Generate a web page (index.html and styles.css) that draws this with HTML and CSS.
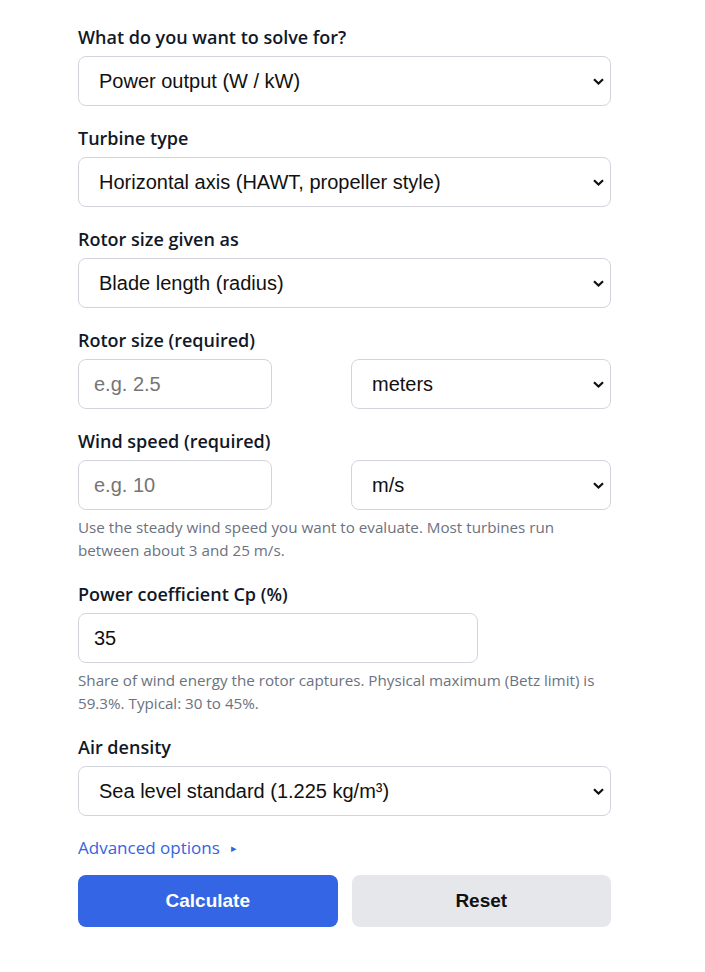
FILE: index.html
```html
<!DOCTYPE html>
<html lang="en">
<head>
<meta charset="utf-8">
<title>Wind turbine power calculator</title>
<link rel="stylesheet" href="styles.css">
</head>
<body>
<form class="calc">
  <div class="field">
    <label class="label" for="solve">What do you want to solve for?</label>
    <select id="solve" class="control select">
      <option>Power output (W / kW)</option>
    </select>
  </div>
  <div class="field">
    <label class="label" for="type">Turbine type</label>
    <select id="type" class="control select">
      <option>Horizontal axis (HAWT, propeller style)</option>
    </select>
  </div>
  <div class="field">
    <label class="label" for="given">Rotor size given as</label>
    <select id="given" class="control select">
      <option>Blade length (radius)</option>
    </select>
  </div>
  <div class="field">
    <label class="label" for="size">Rotor size (required)</label>
    <div class="pair">
      <input id="size" class="control input short" type="text" placeholder="e.g. 2.5">
      <select class="control select">
        <option>meters</option>
      </select>
    </div>
  </div>
  <div class="field">
    <label class="label" for="wind">Wind speed (required)</label>
    <div class="pair">
      <input id="wind" class="control input short" type="text" placeholder="e.g. 10">
      <select class="control select">
        <option>m/s</option>
      </select>
    </div>
    <p class="help">Use the steady wind speed you want to evaluate. Most turbines run between about 3 and 25 m/s.</p>
  </div>
  <div class="field">
    <label class="label" for="cp">Power coefficient Cp (%)</label>
    <input id="cp" class="control input medium" type="text" value="35">
    <p class="help">Share of wind energy the rotor captures. Physical maximum (Betz limit) is 59.3%. Typical: 30 to 45%.</p>
  </div>
  <div class="field">
    <label class="label" for="air">Air density</label>
    <select id="air" class="control select">
      <option>Sea level standard (1.225 kg/m³)</option>
    </select>
  </div>
  <div class="advanced">Advanced options <span class="tri">&#9656;</span></div>
  <div class="actions">
    <button type="button" class="btn primary">Calculate</button>
    <button type="button" class="btn secondary">Reset</button>
  </div>
</form>
</body>
</html>
```
FILE: styles.css
```css
html, body {
  margin: 0;
  padding: 0;
  background: #ffffff;
}

body {
  font-family: "Open Sans", "Noto Sans", sans-serif;
  color: #111827;
}

.calc {
  width: 533px;
  margin: 0 0 0 78px;
  padding-top: 25px;
}

.field {
  margin-bottom: 20px;
}

.label {
  display: block;
  font-size: 18px;
  font-weight: 600;
  line-height: 24px;
  margin-bottom: 7px;
  color: #111827;
}

.control {
  box-sizing: border-box;
  display: block;
  height: 50px;
  border: 1px solid #d1d5db;
  border-radius: 8px;
  background-color: #ffffff;
  font-family: "Liberation Sans", Arial, sans-serif;
  font-size: 20px;
  color: #111111;
  margin: 0;
  outline: none;
}

.select {
  width: 100%;
  appearance: none;
  -webkit-appearance: none;
  padding: 0 36px 0 20px;
  background-image: url("data:image/svg+xml,%3Csvg xmlns='http://www.w3.org/2000/svg' width='11' height='7' viewBox='0 0 11 7'%3E%3Cpath d='M1 1.2 L5.5 5.5 L10 1.2' fill='none' stroke='%23111' stroke-width='2.2'/%3E%3C/svg%3E");
  background-repeat: no-repeat;
  background-position: right 6px center;
  background-size: 11px 7px;
}

.input {
  padding: 0 15px;
}

.input::placeholder {
  color: #757575;
}

.short {
  width: 194px;
}

.medium {
  width: 400px;
}

.pair {
  display: grid;
  grid-template-columns: 1fr 1fr;
  column-gap: 13px;
}

.help {
  margin: 6px 0 0;
  font-size: 15.2px;
  line-height: 23px;
  color: #6b7280;
}

.advanced {
  font-size: 17px;
  font-weight: 500;
  line-height: 24px;
  color: #3563e3;
  margin-bottom: 15px;
}

.tri {
  font-size: 11px;
  margin-left: 7px;
  vertical-align: 2px;
}

.actions {
  display: grid;
  grid-template-columns: 1fr 1fr;
  column-gap: 14px;
}

.btn {
  height: 52px;
  border: none;
  border-radius: 8px;
  font-family: "Liberation Sans", Arial, sans-serif;
  font-size: 19px;
  font-weight: 700;
  cursor: pointer;
}

.primary {
  background: #3465e4;
  color: #ffffff;
}

.secondary {
  background: #e5e7eb;
  color: #111111;
}
```
